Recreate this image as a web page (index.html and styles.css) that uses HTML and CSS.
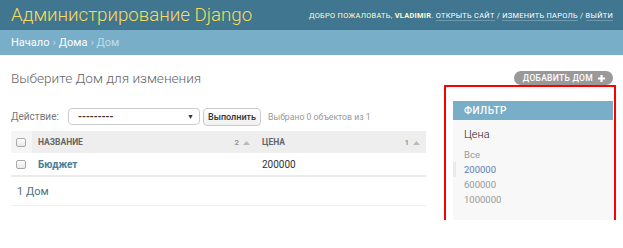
FILE: index.html
```html
<!DOCTYPE html>
<html lang="ru">
<head>
<meta charset="UTF-8">
<meta name="viewport" content="width=device-width, initial-scale=1.0">
<title>Выберите Дом для изменения | Администрирование Django</title>
<link rel="stylesheet" href="styles.css">
</head>
<body>
<div id="header">
<div class="branding">Администрирование Django</div>
<div class="user-tools">
Добро пожаловать, <strong>vladimir</strong>.
<a href="#">Открыть сайт</a> /
<a href="#">Изменить пароль</a> /
<a href="#">Выйти</a>
</div>
</div>
<div class="breadcrumbs">
<a href="#">Начало</a> › <a href="#">Дома</a> › Дом
</div>
<div class="content">
<div class="title-row">
<h1>Выберите Дом для изменения</h1>
<a href="#" class="addlink">Добавить дом
<svg width="9" height="9" viewBox="0 0 10 10"><path d="M5 1v8M1 5h8" stroke="#fff" stroke-width="2.4"/></svg>
</a>
</div>
<div class="changelist">
<div class="results">
<div class="actions">
<label>Действие:</label>
<div class="select"><span>---------</span><span class="arrow">▼</span></div>
<button type="button" class="go">Выполнить</button>
<span class="counter">Выбрано 0 объектов из 1</span>
</div>
<table>
<thead>
<tr>
<th class="check-col"><input type="checkbox" class="check"></th>
<th class="sorted name-col">
<div class="th-inner"><span>Название</span><span class="sortopts">2 <svg width="7" height="5" viewBox="0 0 7 5"><path d="M0 5L3.5 1L7 5z" fill="#bbb"/></svg></span></div>
</th>
<th class="sorted">
<div class="th-inner"><span>Цена</span><span class="sortopts">1 <svg width="7" height="5" viewBox="0 0 7 5"><path d="M0 5L3.5 1L7 5z" fill="#bbb"/></svg></span></div>
</th>
</tr>
</thead>
<tbody>
<tr>
<td class="check-col"><input type="checkbox" class="check"></td>
<th><a href="#">Бюджет</a></th>
<td>200000</td>
</tr>
</tbody>
</table>
<p class="paginator">1 Дом</p>
</div>
<div class="filter">
<h2>Фильтр</h2>
<h3>Цена</h3>
<ul>
<li><a href="#">Все</a></li>
<li class="selected"><a href="#">200000</a></li>
<li><a href="#">600000</a></li>
<li><a href="#">1000000</a></li>
</ul>
<div class="highlight"></div>
</div>
</div>
</div>
</body>
</html>
```

FILE: styles.css
```css
body {
font-family: Roboto, "Liberation Sans", sans-serif;
margin: 0;
padding: 0;
color: #333;
background: #fff;
}
a {
text-decoration: none;
}
#header {
height: 30px;
background: #417690;
display: flex;
align-items: center;
justify-content: space-between;
padding: 0 10px 0 11px;
}
.branding {
color: #f5dd5d;
font-size: 18.7px;
font-weight: 300;
}
.user-tools {
color: #ffc;
font-size: 7.4px;
letter-spacing: 0.3px;
text-transform: uppercase;
}
.user-tools strong {
font-weight: 700;
}
.user-tools a {
color: #fff;
border-bottom: 1px solid rgba(255, 255, 255, 0.25);
}
.breadcrumbs {
height: 25px;
background: #79aec8;
color: #c4dce8;
font-size: 11px;
display: flex;
align-items: center;
padding-left: 11px;
gap: 3px;
}
.breadcrumbs a {
color: #fff;
}
.content {
padding: 14px 10px 0 11px;
}
.title-row {
display: flex;
justify-content: space-between;
align-items: center;
height: 18px;
}
h1 {
margin: 0;
font-size: 13.6px;
font-weight: 300;
color: #666;
}
.addlink {
display: flex;
align-items: center;
gap: 4px;
height: 14px;
padding: 0 7px 0 9px;
background: #999;
border-radius: 8px;
color: #fff;
font-size: 8.5px;
font-weight: 500;
letter-spacing: 0.3px;
text-transform: uppercase;
}
.changelist {
display: flex;
gap: 27px;
margin-top: 14px;
}
.results {
flex: 1;
}
.actions {
display: flex;
align-items: center;
margin-top: 7px;
height: 17px;
font-size: 10px;
}
.actions label {
color: #777;
width: 57px;
}
.select {
width: 132px;
height: 17px;
box-sizing: border-box;
border: 1px solid #ccc;
border-radius: 4px;
display: flex;
align-items: center;
justify-content: space-between;
padding: 0 5px 0 9px;
font-weight: 700;
color: #333;
}
.select .arrow {
font-size: 7px;
}
.go {
margin-left: 3px;
height: 18px;
padding: 0 4px;
border: 1px solid #ccc;
border-radius: 4px;
background: linear-gradient(#fff, #f0f0f0);
font-family: inherit;
font-size: 9px;
font-weight: 500;
color: #333;
}
.counter {
margin-left: 7px;
color: #999;
font-size: 8.7px;
}
table {
width: 100%;
border-collapse: collapse;
margin-top: 6px;
}
thead th {
height: 22px;
background: #eee;
color: #666;
font-size: 8.5px;
font-weight: 700;
text-transform: uppercase;
text-align: left;
padding: 0;
}
thead th.check-col {
background: #f5f5f5;
width: 16px;
}
thead th.name-col {
width: 224px;
}
.th-inner {
display: flex;
justify-content: space-between;
align-items: center;
padding: 0 6px 0 6px;
}
.sortopts {
display: flex;
align-items: center;
gap: 4px;
color: #999;
font-size: 8px;
}
tbody td, tbody th {
height: 22px;
border-bottom: 2px solid #ebebeb;
font-size: 10px;
text-align: left;
padding: 0 6px;
}
tbody th a {
color: #447e9b;
font-weight: 700;
}
.check-col {
text-align: left;
padding: 0 0 0 5px;
}
.check {
appearance: none;
display: block;
width: 10px;
height: 9px;
margin: 0;
border: 1px solid #aaa;
border-radius: 2px;
background: linear-gradient(#fff, #e8e8e8);
}
.paginator {
margin: 0;
height: 28px;
display: flex;
align-items: center;
padding-left: 6px;
border-bottom: 1px solid #f0f0f0;
font-size: 11px;
color: #4f6f85;
}
.filter {
position: relative;
width: 160px;
height: 119px;
background: #f8f8f8;
}
.filter h2 {
margin: 0;
height: 19px;
background: #79aec8;
color: #fff;
font-size: 10px;
font-weight: 500;
letter-spacing: 0.5px;
text-transform: uppercase;
display: flex;
align-items: center;
padding-left: 11px;
}
.filter h3 {
margin: 8px 0 6px 11px;
font-size: 11px;
font-weight: 300;
color: #222;
}
.filter ul {
list-style: none;
margin: 0;
padding: 0;
}
.filter li {
height: 15px;
display: flex;
align-items: center;
padding-left: 11px;
font-size: 9.5px;
}
.filter li a {
color: #999;
}
.filter li.selected {
border-left: 3px solid #eaeaea;
padding-left: 8px;
}
.filter li.selected a {
color: #5b80b2;
}
.highlight {
position: absolute;
top: -16px;
left: -9px;
right: -3px;
bottom: -13px;
border: 2px solid #f00;
}
```
